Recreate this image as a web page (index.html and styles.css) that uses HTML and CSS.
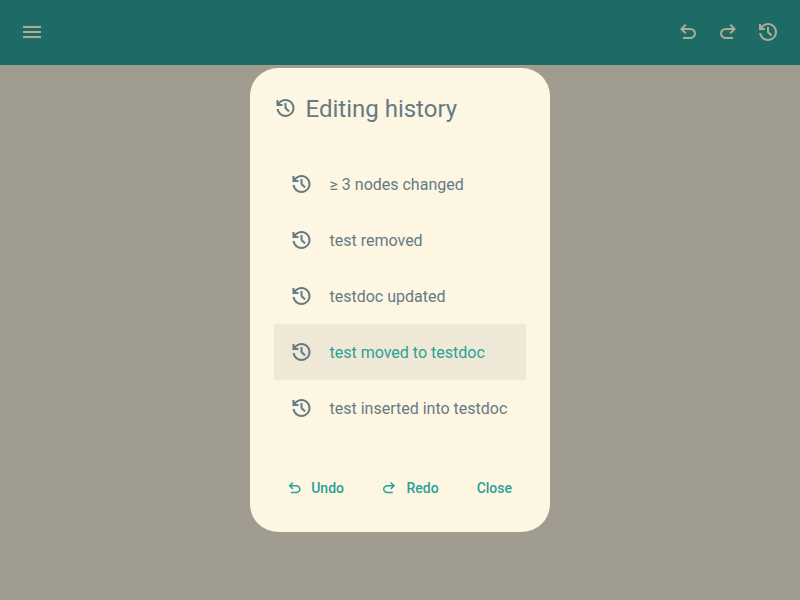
FILE: index.html
```html
<!DOCTYPE html>
<html lang="en">
<head>
<meta charset="utf-8">
<title>Editing history</title>
<link rel="stylesheet" href="styles.css">
</head>
<body>
<svg class="defs" aria-hidden="true">
  <symbol id="history" viewBox="0 0 24 24"><path d="M12 21q-3.45 0-6.012-2.287T3.05 13H5.1q.35 2.6 2.313 4.3T12 19q2.925 0 4.963-2.037T19 12t-2.037-4.962T12 5q-1.725 0-3.225.8T6.25 8H9v2H3V4h2v2.35q1.275-1.6 3.113-2.475T12 3q1.875 0 3.513.713t2.85 1.924 1.925 2.85T21 12t-.712 3.513-1.925 2.85-2.85 1.925T12 21m2.8-4.8L11 12.4V7h2v4.6l3.2 3.2z"/></symbol>
  <symbol id="undo" viewBox="0 0 24 24"><path d="M7 19v-2h7.1q1.575 0 2.737-1T18 13.5 16.837 11 14.1 10H7.8l2.6 2.6L9 14 4 9l5-5 1.4 1.4L7.8 8h6.3q2.425 0 4.163 1.575T20 13.5t-1.737 3.925T14.1 19z"/></symbol>
</svg>
<header class="bar">
  <svg class="icon" viewBox="0 0 24 24"><path d="M3 18h18v-2H3zm0-5h18v-2H3zm0-7v2h18V6z"/></svg>
  <div class="tools">
    <svg class="icon"><use href="#undo"/></svg>
    <svg class="icon flip"><use href="#undo"/></svg>
    <svg class="icon"><use href="#history"/></svg>
  </div>
</header>
<div class="overlay">
  <section class="dialog">
    <h1 class="title"><svg class="icon"><use href="#history"/></svg><span>Editing history</span></h1>
    <ul class="list">
      <li class="item"><svg class="icon"><use href="#history"/></svg>≥ 3 nodes changed</li>
      <li class="item"><svg class="icon"><use href="#history"/></svg>test removed</li>
      <li class="item"><svg class="icon"><use href="#history"/></svg>testdoc updated</li>
      <li class="item active"><svg class="icon"><use href="#history"/></svg><span>test moved to testdoc</span></li>
      <li class="item"><svg class="icon"><use href="#history"/></svg>test inserted into testdoc</li>
    </ul>
    <footer class="actions">
      <button class="action"><svg class="icon small"><use href="#undo"/></svg>Undo</button>
      <button class="action"><svg class="icon small flip"><use href="#undo"/></svg>Redo</button>
      <button class="action">Close</button>
    </footer>
  </section>
</div>
</body>
</html>
```
FILE: styles.css
```css
* { box-sizing: border-box; }
body { margin: 0; height: 600px; overflow: hidden; background: #a09c8f; font-family: Roboto, sans-serif; color: #657b83; }
.defs { position: absolute; width: 0; height: 0; }
.icon { width: 24px; height: 24px; fill: currentColor; flex: none; }
.flip { transform: scaleX(-1); }
.bar { height: 65px; padding: 0 20px 1px; display: flex; align-items: center; justify-content: space-between; background: #1c6c65; color: #b0a99a; }
.tools { display: flex; gap: 16px; }
.overlay { position: absolute; inset: 0; display: flex; align-items: center; justify-content: center; }
.dialog { width: 300px; height: 464px; border-radius: 28px; background: #fdf6e3; display: flex; flex-direction: column; }
.title { margin: 0; height: 80px; padding: 0 23px; display: flex; align-items: center; gap: 8.5px; font-size: 24px; font-weight: 400; }
.title span { padding-top: 2px; }
.title use, .item use { transform: translateX(.5px); }
.list { list-style: none; margin: 8px 24px 0; padding: 0; }
.item { height: 56px; padding: 0 15px; display: flex; align-items: center; gap: 16.5px; font-size: 16px; white-space: nowrap; }
.active { background: #efe8d6; }
.active span { color: #2aa198; }
.actions { margin-top: 32px; padding: 0 24px; display: flex; justify-content: flex-end; gap: 10px; }
.action { border: 0; background: none; height: 40px; padding: 0 14px; display: flex; align-items: center; gap: 8px; font: 500 14px Roboto, sans-serif; color: #2aa198; }
.action:first-child { margin-right: -1.5px; gap: 7.5px; }
.small { width: 18px; height: 18px; }
.action:first-child use { transform: translateX(-.4px); }
```
